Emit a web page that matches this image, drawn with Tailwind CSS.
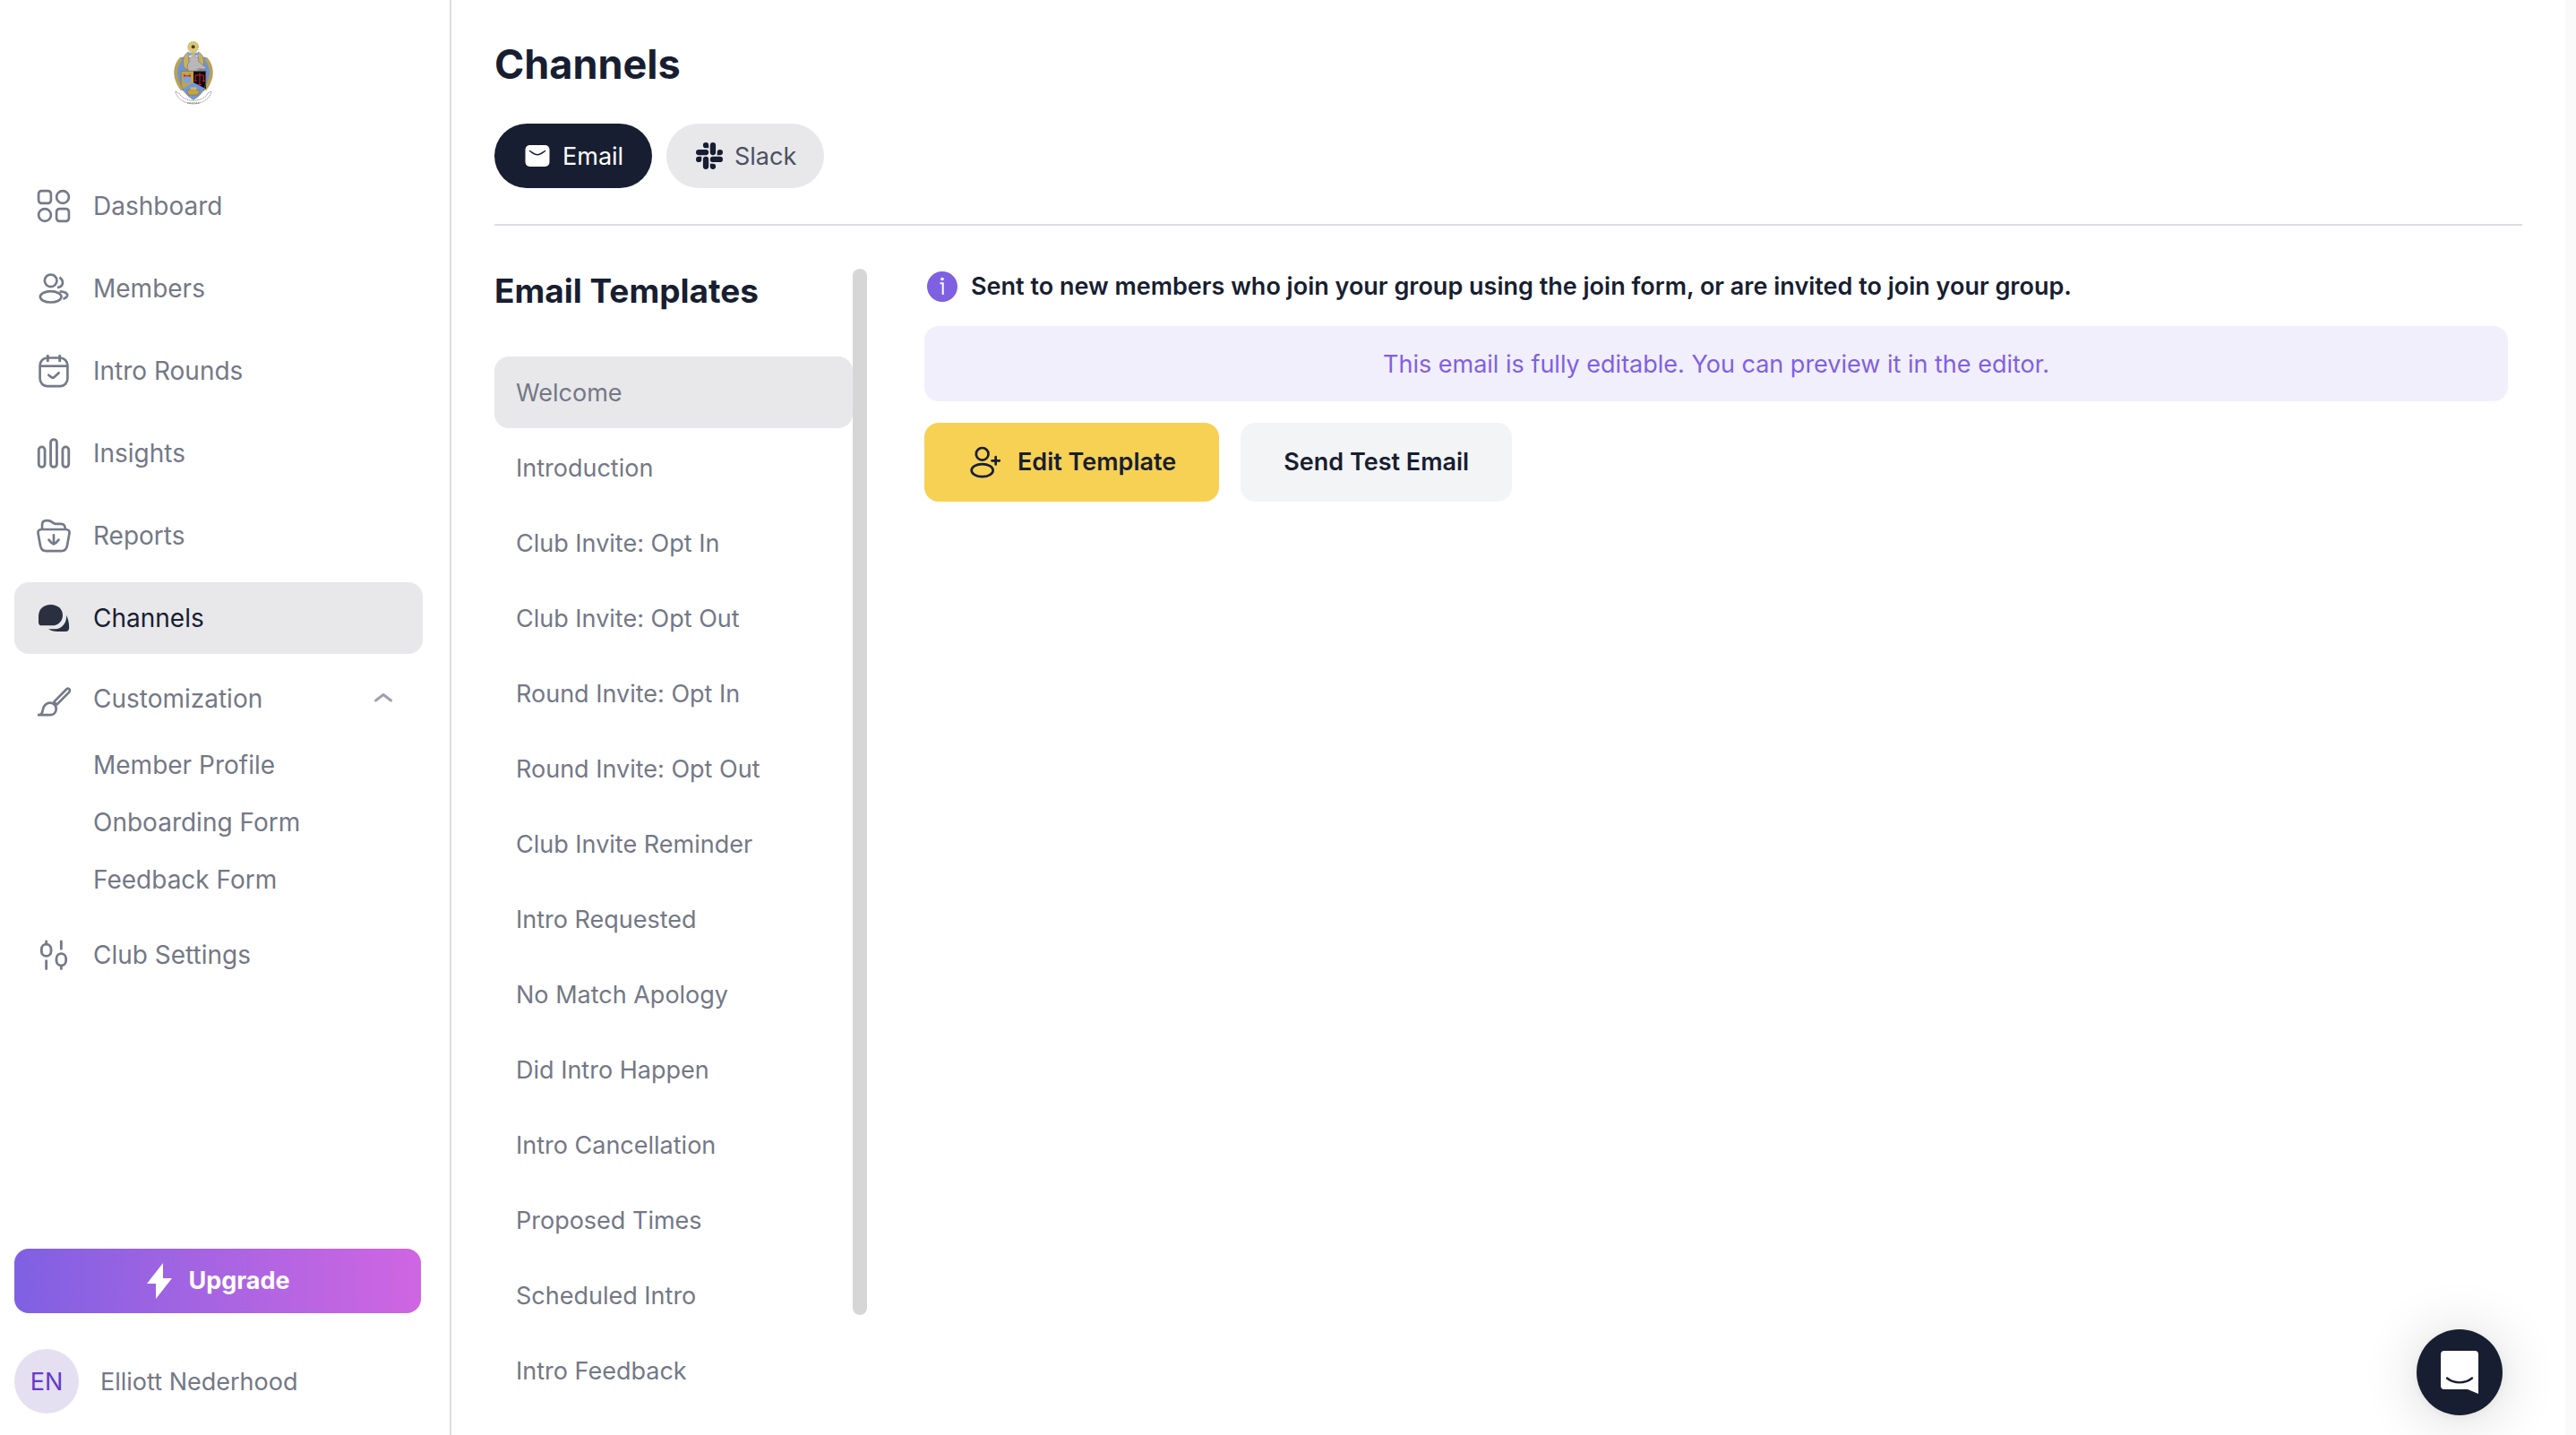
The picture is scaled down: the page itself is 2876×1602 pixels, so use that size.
<!DOCTYPE html>
<html lang="en">
<head>
<meta charset="utf-8">
<title>Channels</title>
<script src="https://cdn.jsdelivr.net/npm/@tailwindcss/browser@4"></script>
</head>
<body class="bg-white font-['Inter',sans-serif] text-[28px] leading-10 text-[#747886]">
<div class="flex h-screen overflow-hidden">
  <aside class="flex w-[504px] shrink-0 flex-col border-r-2 border-[#dcdce0] pr-[30px] pl-4">
    <a href="#" aria-label="Home" class="mt-11 ml-44 block h-[74px] w-12">
      <svg viewBox="96 44 144 222" class="h-full w-full">
        <path d="M125 104C108 118 100 150 108 176c5 18 14 32 26 42l20-30V100z" fill="#6f93d8"/>
        <path d="M211 104c17 14 25 46 17 72-5 18-14 32-26 42l-20-30V100z" fill="#6f93d8"/>
        <path d="M127 108c-16 16-24 44-15 70 3 12 10 24 18 34M209 108c16 16 24 44 15 70-3 12-10 24-18 34" fill="none" stroke="#b9a256" stroke-width="11"/>
        <path d="M152 86c-18 8-22 30-16 52l18 12zM184 86c18 8 22 30 16 52l-18 12z" fill="#c5b068" stroke="#8b7a3c" stroke-width="2"/>
        <circle cx="167" cy="69" r="17" fill="#d9c77a" stroke="#c8b152" stroke-width="5" stroke-dasharray="4 3"/>
        <circle cx="167" cy="69" r="6" fill="#4a4022"/>
        <path d="M148 88h38v10h-38z" fill="#7fa0de"/>
        <path d="M160 88h12v10h-12z" fill="#c9b565"/>
        <path d="M152 150c-8-14-4-26 4-32-6-8 0-18 14-18 12 0 18 8 14 18 8 4 12 14 28 18l-8 8-20-2-14 10z" fill="#b9b7b9" stroke="#77757a" stroke-width="2"/>
        <path d="M127 150h82v38c0 28-24 48-41 58-17-10-41-30-41-58z" fill="#6e97e3"/>
        <path d="M127 152h41v36l-41 24z" fill="#c2a545"/>
        <path d="M168 150h42v60l-42-22z" fill="#0d080c"/>
        <circle cx="147" cy="179" r="12" fill="#7aa0ea"/>
        <path d="M135 166h24M137 160v10M156 160v10" stroke="#c0392b" stroke-width="4"/>
        <path d="M189 156v40M174 164h28M174 164v18M202 164v18M170 183h9M197 183h10M183 196h12" stroke="#d5203d" stroke-width="3" fill="none"/>
        <path d="M146 214h44l-8 16h-30z" fill="#c5a53e" stroke="#8d742a" stroke-width="2"/>
        <path d="M158 204h20v10h-20z" fill="#d2b657"/>
        <path d="M127 150h82v38c0 28-24 48-41 58-17-10-41-30-41-58z" fill="none" stroke="#8d7a38" stroke-width="2"/>
        <path d="M108 218c4 24 28 40 60 42 32-2 56-18 60-42l-12 6c-8 16-26 24-48 25-22-1-40-9-48-25z" fill="#fff" stroke="#6c6a68" stroke-width="2" stroke-dasharray="5 2"/>
        <path d="M148 257h40" stroke="#8a8578" stroke-width="5" stroke-dasharray="4 3"/>
      </svg>
    </a>
    <nav class="mt-[72px] flex flex-col">
      <ul class="flex flex-col gap-3">
        <li><a href="#" class="flex h-20 items-center gap-6 rounded-2xl px-6">
          <svg viewBox="0 0 24 24" class="h-10 w-10" fill="none" stroke="#747a88" stroke-width="1.6"><rect x="1.85" y="1.85" width="8.3" height="8.3" rx="2"/><circle cx="18" cy="6" r="4.15"/><circle cx="6" cy="18" r="4.15"/><rect x="13.85" y="13.85" width="8.3" height="8.3" rx="2"/></svg>
          Dashboard</a></li>
        <li><a href="#" class="flex h-20 items-center gap-6 rounded-2xl px-6">
          <svg viewBox="0 0 24 24" class="h-10 w-10" fill="none" stroke="#747a88" stroke-width="1.6"><circle cx="10" cy="6.8" r="4.1"/><ellipse cx="10" cy="17.6" rx="7.1" ry="3.7"/><path d="M15.8 4.6c3.2 2 3 6.3-1.4 6.8"/><path d="M16 14c6 .4 6.8 3.5 2.3 5"/></svg>
          Members</a></li>
        <li><a href="#" class="flex h-20 items-center gap-6 rounded-2xl px-6">
          <svg viewBox="0 0 24 24" class="h-10 w-10" fill="none" stroke="#747a88" stroke-width="1.6"><rect x="2.75" y="3.3" width="18.5" height="19" rx="5"/><path d="M2.75 8.8h18.5"/><path d="M8 2v3.2M16 2v3.2" stroke-width="1.8" stroke-linecap="round"/><path d="M8.6 14.8l2 1.6q.8.5 1.6-.1l3.2-3" stroke-linecap="round"/></svg>
          Intro Rounds</a></li>
        <li><a href="#" class="flex h-20 items-center gap-6 rounded-2xl px-6">
          <svg viewBox="0 0 24 24" class="h-10 w-10" fill="none" stroke="#747a88" stroke-width="1.7"><rect x="1.95" y="7.75" width="4.1" height="13.5" rx="2"/><rect x="9.95" y="2.75" width="4.1" height="18.5" rx="2"/><rect x="17.95" y="7.75" width="4.1" height="13.5" rx="2"/></svg>
          Insights</a></li>
        <li><a href="#" class="flex h-20 items-center gap-6 rounded-2xl px-6">
          <svg viewBox="0 0 24 24" class="h-10 w-10" fill="none" stroke="#747a88" stroke-width="1.6" stroke-linecap="round" stroke-linejoin="round"><path d="M4 7.8h16c1.900 0 2.700 1.100 2.500 2.600l-1.500 8.200c-.4 2.400-1.600 3.700-4 3.700H7c-2.400 0-3.600-1.300-4-3.700l-1.500-8.200C1.300 8.900 2.100 7.800 4 7.800z"/><path d="M4.200 7.500V4.800c0-1.900 1-2.900 2.900-2.900h1.100c2.600 0 3 2.200 5.200 2.200h3.600c1.700 0 2.500.8 2.700 3.200"/><path d="M12 11.600v6M8.700 14.800c1 1.300 2.100 2.500 3.300 2.900 1.200-.4 2.300-1.600 3.300-2.900"/></svg>
          Reports</a></li>
        <li><a href="#" aria-current="page" class="flex h-20 items-center gap-6 rounded-2xl bg-[#e8e8ea] px-6 text-[#181e31]">
          <svg viewBox="0 0 24 24" class="h-10 w-10" fill="#2a3040"><path d="M10 3c4.600 0 8 3 8 7s-3 7-7 7H4c-1.400 0-2.200-.8-2.200-2.200V10.800C1.800 6 5.300 3 10 3z"/><path d="M20.400 10c1.300 2.500 1.900 4.900 1.900 8.500 0 1.700-.8 2.500-2.400 2.500h-5.500c-2.500 0-4.300-.5-5.900-1.600h4.500c4.500-.3 8-4.400 7.400-9.400z"/></svg>
          Channels</a></li>
        <li>
          <button type="button" aria-expanded="true" class="flex h-[76px] w-full items-center gap-6 pr-[30px] pl-6 text-left">
            <svg viewBox="0 0 24 24" class="h-10 w-10" fill="none" stroke="#747a88" stroke-width="1.6" stroke-linejoin="round"><path d="M12.100 14.200l8.400-8.500c.8-.8 1.400-.8 2 0 .5.700.4 1.200-.3 2l-8.100 8.200z"/><path d="M1.200 22.900h8.500c2.100 0 3.700-1.400 3.900-3.600.2-1.500-.4-2.700-1.300-3.500-1.500-1.100-3.700-1.200-5-.4-1.600 1-2.500 2.900-2.700 4.600-.2 1.500-.9 2.400-2.300 2.900"/></svg>
            <span class="flex-1">Customization</span>
            <svg viewBox="0 0 28 28" class="h-7 w-7" fill="none" stroke="#9ea1ad" stroke-width="3" stroke-linecap="round" stroke-linejoin="round"><path d="M5.500 16l8.500-6.500 8.500 6.500"/></svg>
          </button>
          <ul class="mt-1 pl-[88px]">
            <li><a href="#" class="flex h-16 items-center">Member Profile</a></li>
            <li><a href="#" class="flex h-16 items-center">Onboarding Form</a></li>
            <li><a href="#" class="flex h-16 items-center">Feedback Form</a></li>
          </ul>
        </li>
        <li><a href="#" class="flex h-20 items-center gap-6 rounded-2xl px-6">
          <svg viewBox="0 0 24 24" class="h-10 w-10" fill="none" stroke="#747a88" stroke-width="1.7" stroke-linecap="round"><rect x="3.8" y="4.9" width="6.4" height="7.9" rx="3.2"/><path d="M7 3v1.500M7 16v5.300"/><rect x="13.8" y="11.2" width="6.4" height="7.9" rx="3.2"/><path d="M17 3v5M17 19.500v1.800"/></svg>
          Club Settings</a></li>
      </ul>
    </nav>
    <div class="mt-auto mb-6 flex flex-col gap-10">
      <button type="button" class="mr-0.5 flex h-[72px] items-center justify-center gap-3 rounded-2xl bg-linear-to-r from-[#7f60e2] to-[#d065e2] pr-1 text-[27px] font-bold text-white">
        <svg viewBox="0 0 40 40" class="h-10 w-10" fill="#fff"><path d="M24 0v17h10L16 40V23H6z"/></svg>
        Upgrade
      </button>
      <a href="#" class="flex items-center gap-6 text-[27px]">
        <span class="flex h-[72px] w-[72px] items-center justify-center rounded-full bg-[#e4e0f1] pt-0.5 text-[#6839c8]">EN</span>
        <span class="pt-0.5">Elliott Nederhood</span>
      </a>
    </div>
  </aside>

  <main class="flex min-w-0 flex-1 flex-col px-12 text-[27px]">
    <header class="border-b-2 border-[#dcdde1] pt-[42px] pb-10">
      <h1 class="text-[45px] leading-[60px] font-bold text-[#181e31]">Channels</h1>
      <div class="mt-9 flex gap-4">
        <button type="button" class="flex h-[72px] w-44 items-center gap-3 rounded-full bg-[#181e31] pt-0.5 pl-8 text-white">
          <svg viewBox="0 0 32 32" class="h-8 w-8"><rect x="2.500" y="3" width="27" height="24" rx="5" fill="#fff"/><path d="M7.500 9.500c3 2 5.500 4.200 8.500 4.200s5.500-2.200 8.500-4.200" fill="none" stroke="#181e31" stroke-width="1.500" stroke-linecap="round"/></svg>
          Email
        </button>
        <button type="button" class="flex h-[72px] w-44 items-center gap-3 rounded-full bg-[#e8e8ea] pt-0.5 pl-8 text-[#4a5062]">
          <svg viewBox="-0.800 0 25.600 25.600" class="h-8 w-8" fill="#181e31"><path d="M5.042 15.165a2.528 2.528 0 0 1-2.520 2.523A2.528 2.528 0 0 1 0 15.165a2.527 2.527 0 0 1 2.522-2.520h2.520v2.520zM6.313 15.165a2.527 2.527 0 0 1 2.521-2.520 2.527 2.527 0 0 1 2.521 2.520v6.313A2.528 2.528 0 0 1 8.834 24a2.528 2.528 0 0 1-2.521-2.522v-6.313zM8.834 5.042a2.528 2.528 0 0 1-2.521-2.520A2.528 2.528 0 0 1 8.834 0a2.528 2.528 0 0 1 2.521 2.522v2.520H8.834zM8.834 6.313a2.528 2.528 0 0 1 2.521 2.521 2.528 2.528 0 0 1-2.521 2.521H2.522A2.528 2.528 0 0 1 0 8.834a2.528 2.528 0 0 1 2.522-2.521h6.312zM18.956 8.834a2.528 2.528 0 0 1 2.522-2.521A2.528 2.528 0 0 1 24 8.834a2.528 2.528 0 0 1-2.522 2.521h-2.522V8.834zM17.688 8.834a2.528 2.528 0 0 1-2.523 2.521 2.527 2.527 0 0 1-2.520-2.521V2.522A2.527 2.527 0 0 1 15.165 0a2.528 2.528 0 0 1 2.523 2.522v6.312zM15.165 18.956a2.528 2.528 0 0 1 2.523 2.522A2.528 2.528 0 0 1 15.165 24a2.527 2.527 0 0 1-2.520-2.522v-2.522h2.520zM15.165 17.688a2.527 2.527 0 0 1-2.520-2.523 2.526 2.526 0 0 1 2.520-2.520h6.313A2.527 2.527 0 0 1 24 15.165a2.528 2.528 0 0 1-2.522 2.523h-6.313z"/></svg>
          Slack
        </button>
      </div>
    </header>

    <div class="mt-12 flex min-h-0 flex-1">
      <section class="flex w-[416px] shrink-0">
        <div class="min-w-0 flex-1 overflow-hidden">
          <h2 class="text-[37px] leading-[50px] font-bold whitespace-nowrap text-[#181e31]">Email Templates</h2>
          <ul class="mt-12 flex flex-col gap-1">
            <li><a href="#" aria-current="true" class="flex h-20 items-center rounded-2xl bg-[#e8e8ea] px-6 pt-0.5">Welcome</a></li>
            <li><a href="#" class="flex h-20 items-center rounded-2xl px-6 pt-0.5">Introduction</a></li>
            <li><a href="#" class="flex h-20 items-center rounded-2xl px-6 pt-0.5">Club Invite: Opt In</a></li>
            <li><a href="#" class="flex h-20 items-center rounded-2xl px-6 pt-0.5">Club Invite: Opt Out</a></li>
            <li><a href="#" class="flex h-20 items-center rounded-2xl px-6 pt-0.5">Round Invite: Opt In</a></li>
            <li><a href="#" class="flex h-20 items-center rounded-2xl px-6 pt-0.5">Round Invite: Opt Out</a></li>
            <li><a href="#" class="flex h-20 items-center rounded-2xl px-6 pt-0.5">Club Invite Reminder</a></li>
            <li><a href="#" class="flex h-20 items-center rounded-2xl px-6 pt-0.5">Intro Requested</a></li>
            <li><a href="#" class="flex h-20 items-center rounded-2xl px-6 pt-0.5">No Match Apology</a></li>
            <li><a href="#" class="flex h-20 items-center rounded-2xl px-6 pt-0.5">Did Intro Happen</a></li>
            <li><a href="#" class="flex h-20 items-center rounded-2xl px-6 pt-0.5">Intro Cancellation</a></li>
            <li><a href="#" class="flex h-20 items-center rounded-2xl px-6 pt-0.5">Proposed Times</a></li>
            <li><a href="#" class="flex h-20 items-center rounded-2xl px-6 pt-0.5">Scheduled Intro</a></li>
            <li><a href="#" class="flex h-20 items-center rounded-2xl px-6 pt-0.5">Intro Feedback</a></li>
          </ul>
        </div>
        <div class="h-[1168px] w-4 shrink-0 rounded-full bg-[#d6d6d6]"></div>
      </section>

      <section class="mr-4 ml-16 min-w-0 flex-1">
        <p class="flex items-center gap-3 font-semibold text-[#181e31]">
          <svg viewBox="0 0 40 40" class="h-10 w-10"><circle cx="20" cy="20" r="17" fill="#7f60e2"/><circle cx="20" cy="11.500" r="1.800" fill="#fff"/><path d="M17.500 16.200h3.200V29" fill="none" stroke="#fff" stroke-width="2"/></svg>
          Sent to new members who join your group using the join form, or are invited to join your group.
        </p>
        <p class="mt-6 flex h-[84px] items-center justify-center rounded-2xl bg-[#f1effc] pt-0.5 text-[#7f60e2]">This email is fully editable. You can preview it in the editor.</p>
        <div class="mt-6 flex gap-6 font-semibold text-[#181e31]">
          <button type="button" class="flex h-[88px] items-center gap-4 rounded-2xl bg-[#f6d154] px-12">
            <svg viewBox="0 0 24 24" class="h-10 w-10" fill="none" stroke="#181e31" stroke-width="1.600"><circle cx="10" cy="6.500" r="4.100"/><ellipse cx="10" cy="17.500" rx="7.200" ry="4.200"/><path d="M19 8.500v5M16.500 11h5" stroke-linecap="round"/></svg>
            Edit Template
          </button>
          <button type="button" class="flex h-[88px] items-center rounded-2xl bg-[#f3f4f6] px-12">Send Test Email</button>
        </div>
      </section>
    </div>
  </main>
  <div class="w-3 shrink-0 bg-[#fafafa]"></div>
</div>
<button type="button" aria-label="Open chat" class="fixed right-[82px] bottom-[22px] flex h-24 w-24 items-center justify-center rounded-full bg-[#181e31] shadow-[0_2px_12px_rgba(0,0,0,0.06),0_4px_64px_rgba(0,0,0,0.16)]">
  <svg viewBox="0 0 42 48" class="h-12 w-[42px]"><path d="M4 0h34a4 4 0 0 1 4 4v44l-12-5H4a4 4 0 0 1-4-4V4a4 4 0 0 1 4-4z" fill="#fff"/><path d="M7 30.500c8 6.500 20 6.500 28 0" fill="none" stroke="#181e31" stroke-width="2.400" stroke-linecap="round"/></svg>
</button>
</body>
</html>
